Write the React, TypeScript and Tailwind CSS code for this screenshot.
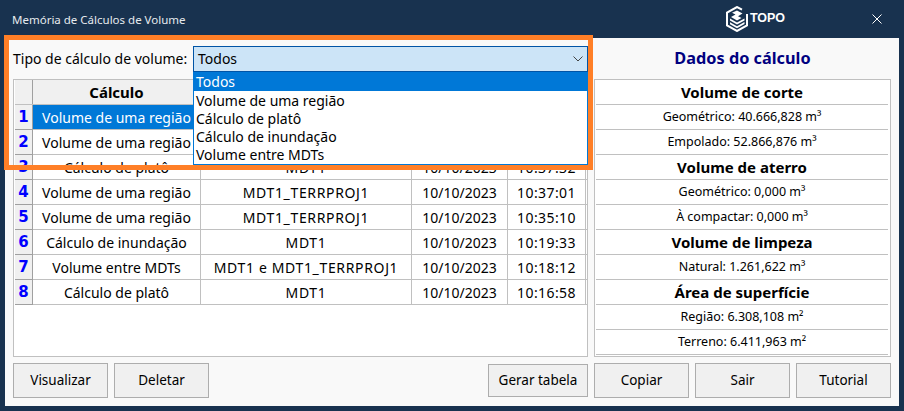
const font = "font-['Noto_Sans',_'Open_Sans',_sans-serif]";

const rows = [
  ["Volume de uma região", "MDT1_TERRPROJ1", "10/10/2023", "10:40:15"],
  ["Volume de uma região", "MDT1_TERRPROJ1", "10/10/2023", "10:38:20"],
  ["Cálculo de platô", "MDT1", "10/10/2023", "10:37:32"],
  ["Volume de uma região", "MDT1_TERRPROJ1", "10/10/2023", "10:37:01"],
  ["Volume de uma região", "MDT1_TERRPROJ1", "10/10/2023", "10:35:10"],
  ["Cálculo de inundação", "MDT1", "10/10/2023", "10:19:33"],
  ["Volume entre MDTs", "MDT1 e MDT1_TERRPROJ1", "10/10/2023", "10:18:12"],
  ["Cálculo de platô", "MDT1", "10/10/2023", "10:16:58"],
];

const side: [string, boolean][] = [
  ["Volume de corte", true],
  ["Geométrico: 40.666,828 m³", false],
  ["Empolado: 52.866,876 m³", false],
  ["Volume de aterro", true],
  ["Geométrico: 0,000 m³", false],
  ["À compactar: 0,000 m³", false],
  ["Volume de limpeza", true],
  ["Natural: 1.261,622 m³", false],
  ["Área de superfície", true],
  ["Região: 6.308,108 m²", false],
  ["Terreno: 6.411,963 m²", false],
];

const options = ["Todos", "Volume de uma região", "Cálculo de platô", "Cálculo de inundação", "Volume entre MDTs"];

function Logo() {
  return (
    <svg width="22" height="26" viewBox="0 0 22 26" fill="none">
      <path d="M16 3.6 L11 1 L1 6.5 L1 19.5 L11 25 L21 19.5 L21 8" stroke="#ffffff" strokeWidth="2" />
      <path d="M11 4.5 L16.5 7.6 L12 10.2 L15.5 12 L11 14.6 L5 11 L9.5 8.4 L6 6.8 Z" fill="#ffffff" />
      <path d="M4 12.5 L11 16.6 L18.5 12.4 L18.5 14.4 L11 18.6 L4 14.5 Z" fill="#ffffff" />
      <path d="M4 16.2 L11 20.3 L18.5 16.1 L18.5 18 L11 22.3 L4 18.2 Z" fill="#ffffff" />
    </svg>
  );
}

function Btn({ label, className }: { label: string; className: string }) {
  return (
    <button className={`flex items-center justify-center border border-[#adadad] bg-[#f0f0f0] text-[13.5px] text-black ${className}`}>
      {label}
    </button>
  );
}

export default function App() {
  return (
    <div className={`relative flex h-[411px] w-[904px] flex-col overflow-hidden bg-[#18324f] ${font}`}>
      <div className="flex h-[38px] shrink-0 items-center pb-[1px] pl-[12px] pr-[22px]">
        <span className="w-[714px] pt-[2px] text-[11.5px] text-[#e6eaee]">Memória de Cálculos de Volume</span>
        <div className="flex items-center gap-[2px]">
          <Logo />
          <span className="font-['Liberation_Sans',_sans-serif] text-[12.5px] font-bold tracking-[-0.1px] text-white">TOPO</span>
        </div>
        <svg className="ml-auto" width="10" height="10" viewBox="0 0 10 10" stroke="#ffffff" strokeWidth="1">
          <path d="M0.5 0.5 L9.5 9.5 M9.5 0.5 L0.5 9.5" />
        </svg>
      </div>

      <div className="mx-[5px] mb-[5px] flex flex-1 flex-col bg-[#f9f9f9] px-[8px]">
        <div className="flex h-[41px] shrink-0">
          <div className="flex w-[575px] items-start pt-[8px]">
            <span className="w-[180px] whitespace-nowrap pt-[2px] text-[14px] text-black">Tipo de cálculo de volume:</span>
            <div className="flex h-[26px] flex-1 items-center justify-between border border-[#0054a6] bg-[#cce4f7] pb-[1px] pl-[4px] pr-[4px] text-[14px] text-black">
              Todos
              <svg width="10" height="6" viewBox="0 0 10 6" fill="none" stroke="#444" strokeWidth="1">
                <path d="M0.5 0.5 L5 5 L9.5 0.5" />
              </svg>
            </div>
          </div>
          <div className="ml-[6px] flex w-[297px] items-center justify-center pb-[1px]">
            <span className="text-[16.3px] font-bold text-[#000080]">Dados do cálculo</span>
          </div>
        </div>

        <div className="flex h-[278px] shrink-0 gap-[6px]">
          <div className="h-full w-[575px] border border-[#c0c0c0] bg-white pl-[1px] text-[14px] text-black">
            <div className="flex h-[25px] border-b border-[#c0c0c0] font-bold">
              <div className="w-[18px] border-r border-[#a0a0a0] bg-[#f0f0f0]" />
              <div className="flex w-[168px] items-center justify-center border-r border-[#c0c0c0] bg-[#f0f0f0] text-[15px]">Cálculo</div>
              <div className="flex w-[211px] items-center justify-center border-r border-[#c0c0c0] bg-[#f0f0f0] text-[15px]">MDT</div>
              <div className="flex w-[96px] items-center justify-center border-r border-[#c0c0c0] bg-[#f0f0f0] text-[15px]">Data</div>
              <div className="flex w-[78px] items-center justify-center border-r border-[#c0c0c0] bg-[#f0f0f0] text-[15px]">Hora</div>
            </div>
            {rows.map((r, i) => (
              <div key={i} className="flex h-[25px] border-b border-[#c0c0c0]">
                <div className="-mb-[1px] flex w-[18px] items-center justify-center border-b border-r border-[#a0a0a0] bg-[#f0f0f0] pt-[1px] font-['DejaVu_Sans',_sans-serif] text-[15px] font-bold text-[#0000ff]">
                  {i + 1}
                </div>
                <div className={`flex w-[168px] items-center justify-center border-r border-[#c0c0c0] pt-[1px] ${i === 0 ? "bg-[#0078d7] text-white" : ""}`}>{r[0]}</div>
                <div className="flex w-[211px] items-center justify-center border-r border-[#c0c0c0] pt-[1px] tracking-[0.65px]">{r[1]}</div>
                <div className="flex w-[96px] items-center justify-center border-r border-[#c0c0c0] pt-[1px]">{r[2]}</div>
                <div className="flex w-[78px] items-center justify-center border-r border-[#c0c0c0] pt-[1px] tracking-[0.4px]">{r[3]}</div>
              </div>
            ))}
          </div>

          <div className="h-full w-[297px] border border-[#c0c0c0] bg-white pl-[1px] pr-[2px] text-black">
            {side.map(([t, b], i) => (
              <div key={i} className={`flex h-[25px] items-center justify-center border-b border-[#c0c0c0] ${b ? "text-[15px] font-bold" : "pt-[1px] text-[12.5px]"}`}>
                {t}
              </div>
            ))}
          </div>
        </div>

        <div className="flex flex-1 items-start pt-[6px]">
          <Btn label="Visualizar" className="h-[35px] w-[95px]" />
          <Btn label="Deletar" className="ml-[6px] h-[35px] w-[95px]" />
          <Btn label="Gerar tabela" className="ml-[279px] mt-[1px] h-[33px] w-[100px]" />
          <Btn label="Copiar" className="ml-[6px] h-[35px] w-[95px]" />
          <Btn label="Sair" className="ml-[6px] h-[35px] w-[95px]" />
          <Btn label="Tutorial" className="ml-[6px] h-[35px] w-[95px]" />
        </div>
      </div>

      <div className="absolute left-[193px] top-[72px] w-[395px] border border-t-0 border-[#0078d7] bg-white pb-[1px] text-[14px] leading-[18px] text-black">
        {options.map((o, i) => (
          <div key={o} className={`pl-[2px] pt-[1px] ${i === 0 ? "h-[19px] bg-[#0078d7] text-white" : "h-[18px]"}`}>{o}</div>
        ))}
      </div>

      <div className="pointer-events-none absolute left-[4px] top-[35px] h-[135px] w-[589px] border-[5px] border-[#ff7f27]" />
    </div>
  );
}
